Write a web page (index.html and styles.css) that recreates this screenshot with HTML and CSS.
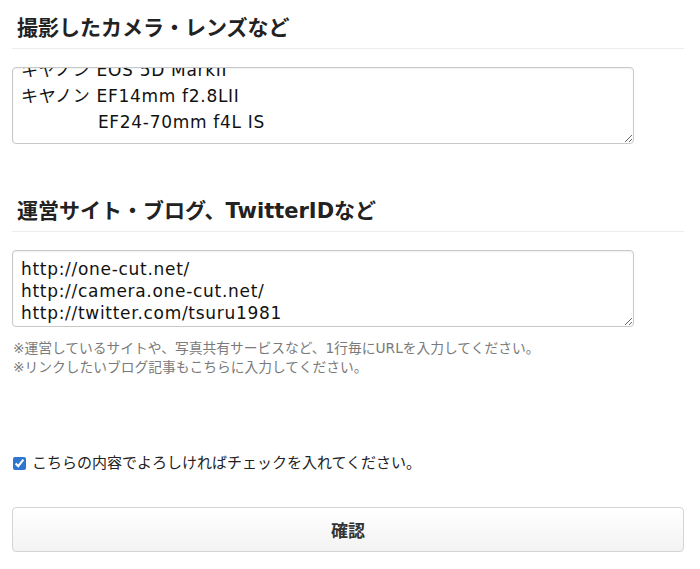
FILE: index.html
```html
<!DOCTYPE html>
<html lang="ja">
<head>
<meta charset="utf-8">
<title>フォーム</title>
<link rel="stylesheet" href="styles.css">
</head>
<body>
<form class="form">
  <h3 class="section-title">撮影したカメラ・レンズなど</h3>
  <textarea class="field field-camera" id="camera">キヤノン EOS 5D MarkII
キヤノン EF14mm f2.8LII
　　　　 EF24-70mm f4L IS

</textarea>

  <h3 class="section-title section-gap">運営サイト・ブログ、TwitterIDなど</h3>
  <textarea class="field field-site">http://one-cut.net/
http://camera.one-cut.net/
http://twitter.com/tsuru1981</textarea>
  <p class="help">※運営しているサイトや、写真共有サービスなど、1行毎にURLを入力してください。<br>※リンクしたいブログ記事もこちらに入力してください。</p>

  <label class="confirm"><input type="checkbox" class="check" checked>こちらの内容でよろしければチェックを入れてください。</label>

  <button type="button" class="submit">確認</button>
</form>
<script src="script.js"></script>
</body>
</html>
```

FILE: styles.css
```css
* { box-sizing: border-box; }

html, body {
  margin: 0;
  padding: 0;
  background: #fff;
}

body {
  font-family: "DejaVu Sans", "Noto Sans CJK JP", sans-serif;
  color: #222;
}

.form {
  display: flex;
  flex-direction: column;
  align-items: flex-start;
  width: 672px;
  margin-left: 12px;
}

.section-title {
  align-self: stretch;
  margin: 0;
  padding: 13px 5px 5px;
  font-size: 21px;
  line-height: 30px;
  font-weight: bold;
  color: #222;
  border-bottom: 1px solid #ececec;
}

.section-gap {
  margin-top: 39px;
}

.field {
  margin-top: 18px;
  width: 622px;
  height: 77px;
  border: 1px solid #c8c8c8;
  border-radius: 4px;
  box-shadow: inset 0 1px 2px rgba(0,0,0,0.06);
  font-family: "DejaVu Sans", "Noto Sans CJK JP", sans-serif;
  font-size: 17px;
  letter-spacing: 0.7px;
  color: #111;
  overflow: hidden;
  resize: both;
  background: #fff;
}

.field-camera {
  padding: 4px 8px;
  line-height: 26px;
}

.field-site {
  padding: 7px 8px 4px;
  line-height: 22px;
}

.help {
  margin: 12px 0 0;
  font-size: 13.75px;
  line-height: 19px;
  color: #7a7a7a;
  padding-left: 1px;
}

.confirm {
  margin-top: 76px;
  display: flex;
  align-items: center;
  font-size: 15px;
  line-height: 20px;
  color: #222;
}

.check {
  margin: 0 6px 0 1px;
  width: 13px;
  height: 13px;
  accent-color: #2f76d2;
}

.submit {
  margin-top: 34px;
  width: 672px;
  height: 45px;
  border: 1px solid #d4d4d4;
  border-radius: 4px;
  background: linear-gradient(#ffffff, #f3f3f3);
  font-family: "DejaVu Sans", "Noto Sans CJK JP", sans-serif;
  font-size: 17px;
  font-weight: bold;
  color: #333;
}
```

FILE: script.js
```js
document.getElementById('camera').scrollTop = 15;
```
